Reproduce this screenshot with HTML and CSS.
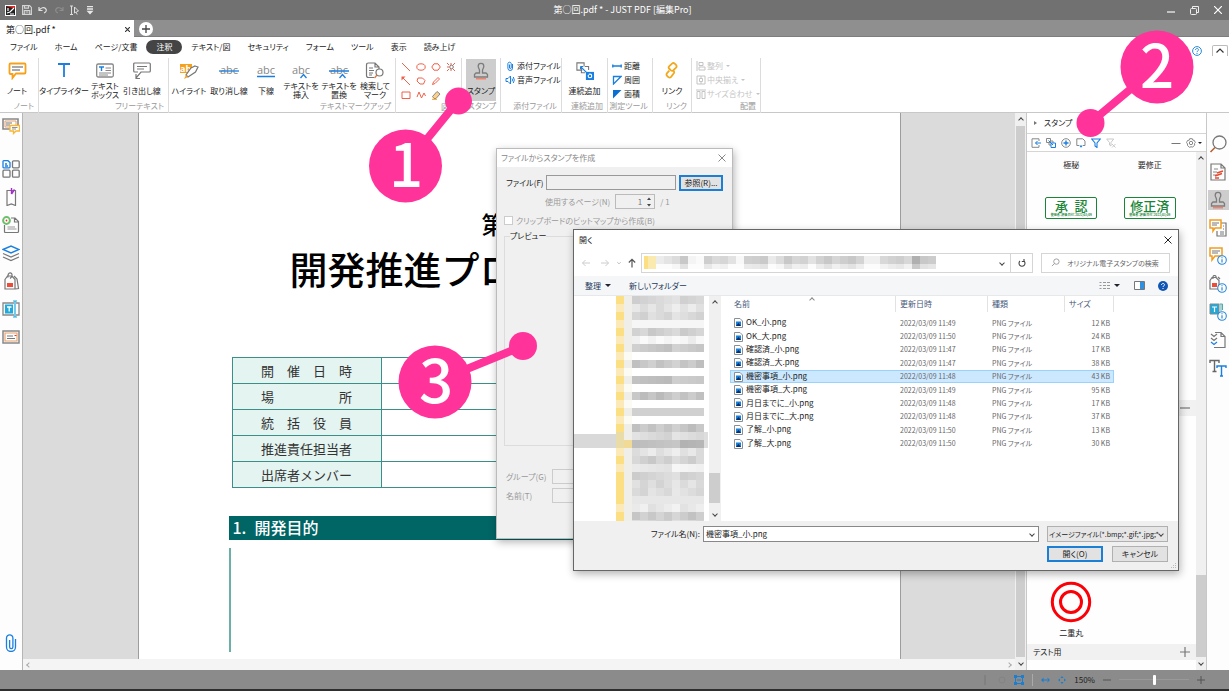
FILE: index.html
```html
<!DOCTYPE html>
<html lang="ja">
<head>
<meta charset="utf-8">
<title>第○回.pdf * - JUST PDF [編集Pro]</title>
<link rel="stylesheet" href="styles.css">
</head>
<body>
<svg class="defs" aria-hidden="true">
  <symbol id="stamp" viewBox="0 0 18 18"><path d="M7.500 11V8.500C7.500 7 6.200 6 6.200 4.200a2.800 2.800 0 0 1 5.600 0C11.800 6 10.500 7 10.500 8.500V11H14l1.500 1.500V15h-13v-2.500L4 11z" fill="none" stroke="#7c7c7c" stroke-width="1.300"/><path d="M4 16.700h10" stroke="#f0836f" stroke-width="1.600"/></symbol>
  <symbol id="png" viewBox="0 0 9 10"><path d="M.5.5h5.500l2.500 2.500v6.500h-8z" fill="#fff" stroke="#8a8f96"/><path d="M2 3.500h5V8H2z" fill="#1a7fd6"/><path d="M2 8l2.500-3L7 8z" fill="#0a2b66"/></symbol>
  <symbol id="info" viewBox="0 0 10 10"><circle cx="5" cy="5" r="4.300" fill="#fff" stroke="#2b88d8" stroke-width="1.100"/><path d="M5 4.300v3.200M5 2.300v1" stroke="#2b88d8" stroke-width="1.200"/></symbol>
</svg>

<header class="titlebar">
  <div class="quick">
    <svg width="11" height="11" viewBox="0 0 11 11"><path d="M0 0h11v11H0z" fill="#fff"/><path d="M1 1h9v9H1z" fill="#222"/><path d="M1 1h9v2L8 3z" fill="#e8251c"/><path d="M2 8l3-1 4-4M3 3v3M5 9h4" stroke="#fff" stroke-width="1.200" fill="none"/></svg>
    <button aria-label="保存"><svg width="10" height="10" viewBox="0 0 10 10" fill="none" stroke="#d5d5d5" stroke-width="1.100"><path d="M.6.6h7l1.800 1.800v7H.6zM2.500.6v2.500h4V.6M2.300 9.200V5.500h5.400v3.700M3.500 7h3"/></svg></button>
    <button aria-label="元に戻す"><svg width="10" height="8" viewBox="0 0 10 8" fill="none" stroke="#e0e0e0" stroke-width="1.200"><path d="M1 1v3.500h3.500M1.200 4.200C3 1.500 6 1 7.500 2.500S8.500 6 6 7"/></svg></button>
    <button aria-label="やり直し"><svg width="10" height="8" viewBox="0 0 10 8" fill="none" stroke="#8d8d8d" stroke-width="1.200"><path d="M9 1v3.500H5.500M8.800 4.200C7 1.500 4 1 2.500 2.500S1.500 6 4 7"/></svg></button>
    <button aria-label="選択"><svg width="10" height="10" viewBox="0 0 10 10" fill="none" stroke="#dedede" stroke-width="1"><path d="M0 1h3M1.500 1v8M0 9.500h3M4.500 2v6l1.500-1 1.200 2.500M4.500 2l4 4-2 .6"/></svg></button>
    <button aria-label="カスタマイズ"><svg width="8" height="9" viewBox="0 0 8 9" fill="#e8e8e8"><path d="M1 0h6v1.200H1zM1 2.200h6v1.600H1zM.5 4.800h7L4 8.500z"/></svg></button>
  </div>
  <div class="app-name">第○回.pdf * - JUST PDF [編集Pro]</div>
  <div class="wincontrols">
    <button aria-label="最小化"><svg width="8" height="8" viewBox="0 0 8 8"><path d="M0 6h8" stroke="#eee" stroke-width="1.300"/></svg></button>
    <button aria-label="元のサイズに戻す"><svg width="9" height="9" viewBox="0 0 9 9" fill="none" stroke="#eee"><rect x=".5" y="2.500" width="6" height="6" rx="1"/><path d="M2.500 2V.5h6v6H7"/></svg></button>
    <button aria-label="閉じる"><svg width="8" height="8" viewBox="0 0 8 8"><path d="M0 0l8 8M8 0L0 8" stroke="#fff" stroke-width="1.200"/></svg></button>
  </div>
</header>

<div class="tabbar">
  <div class="doctab"><span>第○回.pdf *</span><button aria-label="タブを閉じる"><svg width="5" height="5" viewBox="0 0 5 5"><path d="M0 0l5 5M5 0L0 5" stroke="#333" stroke-width="1.100"/></svg></button></div>
  <button class="newtab" aria-label="新しいタブ"><svg width="14" height="14" viewBox="0 0 14 14"><circle cx="7" cy="7" r="7" fill="#fff"/><path d="M3 7h8M7 3v8" stroke="#444" stroke-width="1.300"/></svg></button>
</div>

<nav class="menu">
  <button>ファイル</button><button>ホーム</button><button>ページ/文書</button><button class="current">注釈</button><button>テキスト/図</button><button>セキュリティ</button><button>フォーム</button><button>ツール</button><button>表示</button><button>読み上げ</button>
  <div class="menu-end">
    <button aria-label="ヘルプ"><svg width="10" height="10" viewBox="0 0 10 10" fill="none" stroke="#2b88d8"><circle cx="5" cy="5" r="4.400"/><path d="M3.500 4c0-2 3-2 3-.2C6.500 5 5 4.800 5 6.200M5 7v1"/></svg></button>
    <button class="collapse" aria-label="リボンを閉じる"><svg width="8" height="5" viewBox="0 0 8 5"><path d="M.5 4.500L4 1l3.500 3.500" fill="none" stroke="#333" stroke-width="1.200"/></svg></button>
  </div>
</nav>

<section class="ribbon">
  <div class="group g-note"><div class="tools"><button class="tool">
    <svg width="19" height="18" viewBox="0 0 19 18" fill="none"><path d="M2.500 1.500h14q1 0 1 1v8q0 1-1 1H8L4.500 16v-4h-2q-1 0-1-1V2.500q0-1 1-1z" stroke="#f7a11a" stroke-width="1.800"/><path d="M4 5h11M4 8h8" stroke="#555" stroke-width="1.200"/></svg><span>ノート</span></button></div><h2>ノート</h2></div>

  <div class="group g-free"><div class="tools">
    <button class="tool w50"><svg width="14" height="18" viewBox="0 0 14 18"><path d="M1 2h12M7 2v13" stroke="#1a7fe0" stroke-width="1.800"/></svg><span>タイプライター</span></button>
    <button class="tool w32"><svg width="18" height="18" viewBox="0 0 18 18" fill="none"><rect x=".7" y="2" width="16.600" height="13" rx="1.500" stroke="#888" stroke-width="1.300"/><path d="M3 5h5M5.500 5v4" stroke="#1a7fe0" stroke-width="1.400"/><path d="M9.500 6h5.500M9.500 8.500h5.500M3 11h12M3 13h9" stroke="#888"/></svg><span>テキスト<br>ボックス</span></button>
    <button class="tool w42"><svg width="18" height="18" viewBox="0 0 18 18" fill="none" stroke="#777" stroke-width="1.200"><path d="M1.700 1h14.600q1 0 1 1v7q0 1-1 1H8l-5 6M1.700 1q-1 0-1 1v7q0 1 1 1H5M3 12v4.500h4M4 4.500h10M4 7h7"/></svg><span>引き出し線</span></button>
  </div><h2>フリーテキスト</h2></div>

  <div class="group g-mark"><div class="tools">
    <button class="tool w40"><svg width="20" height="18" viewBox="0 0 20 18"><path d="M1 2h12v9H1z" fill="#f7a11a"/><text x="1" y="10" class="abc white">ab</text><path d="M16 4l3 1-2.500 5L9 15l-2-2 5-7z" fill="#fff" stroke="#777" stroke-width="1.200"/><path d="M7 13l2 2-4 2z" fill="#f7a11a"/></svg><span>ハイライト</span></button>
    <button class="tool w40"><svg width="20" height="18" viewBox="0 0 20 18"><text x="1" y="12" class="abc">abc</text><path d="M0 9h20" stroke="#1a7fe0" stroke-width="1.300"/></svg><span>取り消し線</span></button>
    <button class="tool w34"><svg width="20" height="18" viewBox="0 0 20 18"><text x="1" y="12" class="abc">abc</text><path d="M1 14.500h18" stroke="#1a7fe0" stroke-width="1.500"/></svg><span>下線</span></button>
    <button class="tool w36"><svg width="20" height="18" viewBox="0 0 20 18"><text x="1" y="12" class="abc">abc</text><path d="M9.500 16l3-3.500 3 3.500" fill="none" stroke="#1a7fe0" stroke-width="1.300"/></svg><span>テキストを<br>挿入</span></button>
    <button class="tool w40"><svg width="20" height="18" viewBox="0 0 20 18"><text x="1" y="12" class="abc">abc</text><path d="M0 9h20M10.500 16l3-3.500 3 3.500" fill="none" stroke="#1a7fe0" stroke-width="1.300"/></svg><span>テキストを<br>置換</span></button>
    <button class="tool w32"><svg width="20" height="18" viewBox="0 0 20 18" fill="none" stroke="#777" stroke-width="1.200"><path d="M9 15.500H3.500q-2 0-2-2V3q0-2 2-2H10l4 4v2M10 1v4h4M4 6h4M4 8.500h5M4 11h4M4 13h3"/><circle cx="14.500" cy="10.500" r="3.500" fill="#fff"/><path d="M12 13l-2.500 3" stroke="#d9773a"/></svg><span>検索して<br>マーク</span></button>
  </div><h2>テキストマークアップ</h2></div>

  <div class="group g-shape"><div class="shapes">
    <button aria-label="直線"><svg viewBox="0 0 10 10"><path d="M1 1l8 8"/></svg></button>
    <button aria-label="楕円"><svg viewBox="0 0 10 10"><ellipse cx="5" cy="5" rx="4.200" ry="3.200"/></svg></button>
    <button aria-label="多角形"><svg viewBox="0 0 10 10"><path d="M3 1.800h4L9.300 5 7 8.200H3L.8 5z"/></svg></button>
    <button aria-label="雲形"><svg viewBox="0 0 10 10"><path d="M1 1l2 2M9 1L7 3M1 9l2-2M9 9L7 7M5 1v2M5 9V7M1 5h2"/><circle cx="5.500" cy="5" r="1.800" stroke="#777"/></svg></button>
    <button aria-label="矢印"><svg viewBox="0 0 10 10"><path d="M2 2l7 7"/><path d="M.5.5h4l-4 4z" fill="#f0604a" stroke="none"/></svg></button>
    <button aria-label="多角形2"><svg viewBox="0 0 10 10"><path d="M2 2h4.500L9 4.500 7.500 8H4L1 5z"/></svg></button>
    <button aria-label="鉛筆"><svg viewBox="0 0 10 10"><path d="M1.500 8.500L2.500 6 7 1.500 8.500 3 4 7.500z"/></svg></button><i></i>
    <button aria-label="四角形"><svg viewBox="0 0 10 10"><path d="M1 2h8v6.500H1z"/></svg></button>
    <button aria-label="折れ線"><svg viewBox="0 0 10 10"><path d="M1 7l2-5 2.500 6L8 3l1.500 3"/></svg></button>
    <button aria-label="消しゴム"><svg viewBox="0 0 10 10"><path d="M1.500 6.500l4.500-5L9 4 5 8.500H3z" fill="#fbd08a" stroke="#888"/><path d="M1 9.300h5" stroke="#f7a11a"/></svg></button>
  </div><h2>図形</h2></div>

  <div class="group g-stamp"><div class="tools"><button class="tool pressed"><svg width="18" height="18"><use href="#stamp"/></svg><span>スタンプ</span></button></div><h2>スタンプ</h2></div>

  <div class="group g-attach"><div class="rows">
    <button><svg viewBox="0 0 10 10"><path d="M7.500 3v4.200a2.300 2.300 0 0 1-4.600 0V2.500a1.700 1.700 0 0 1 3.300 0V7a.9.9 0 0 1-1.700 0V3.500" fill="none" stroke="#1a7fe0"/></svg>添付ファイル</button>
    <button><svg viewBox="0 0 10 10" fill="none" stroke="#1a7fe0"><path d="M1 3.500h2L5.500 1v8L3 6.500H1zM7 3.500q1 1.500 0 3M8.300 2q2 3 0 6"/></svg>音声ファイル</button>
  </div><h2>添付ファイル</h2></div>

  <div class="group g-seq"><div class="tools"><button class="tool"><svg width="20" height="20" viewBox="0 0 20 20" fill="none" stroke="#777" stroke-width="1.200"><path d="M7 9H1V1h8v4M6 12v-3M10 5h4v4M6 5v7h4"/><path d="M11 11h9v9h-9z" fill="#1a7fe0" stroke="none"/><circle cx="15.500" cy="15.500" r="2" stroke="#fff"/><path d="M5 5l9 9M5 5v3M5 5h3" stroke="#1a7fe0"/></svg><span>連続追加</span></button></div><h2>連続追加</h2></div>

  <div class="group g-measure"><div class="rows">
    <button><svg viewBox="0 0 10 10"><path d="M1 5h8M.8 3.500v3M9.200 3.500v3" stroke="#1a7fe0" stroke-width="1.400"/></svg>距離</button>
    <button><svg viewBox="0 0 10 10"><path d="M1.500 9V1.500H9z" fill="none" stroke="#1a7fe0" stroke-width="1.300"/></svg>周囲</button>
    <button><svg viewBox="0 0 10 10"><path d="M1 9.500V1h8.500z" fill="#0a6fd0"/></svg>面積</button>
  </div><h2>測定ツール</h2></div>

  <div class="group g-link"><div class="tools"><button class="tool"><svg width="16" height="20" viewBox="0 0 16 20" fill="none" stroke="#f2a81d" stroke-width="2"><path d="M6.500 9L5 7.500Q3.500 6 5 4.500L8 1.800q1.500-1.300 3 0l1.500 1.500q1.300 1.500 0 3L9 9.500Q8 10.500 6.500 9zM9.500 9.500q1.500 1.500.5 3L7 16.500q-1.500 1.500-3 .3L2.500 15.300q-1.300-1.300 0-3L5 9.500"/></svg><span>リンク</span></button></div><h2>リンク</h2></div>

  <div class="group g-align"><div class="rows off">
    <button disabled><svg viewBox="0 0 10 10"><path d="M1 0v10M3 1.500h4v3H3zM3 6h6v3H3z"/></svg>整列<b class="dd"></b></button>
    <button disabled><svg viewBox="0 0 10 10"><path d="M1 1h8v8H1zM3.500 3.500h3v3h-3zM5 1v2M5 7v2"/></svg>中央揃え<b class="dd"></b></button>
    <button disabled><svg viewBox="0 0 10 10"><path d="M1 2.500h3v7H1zM6 2.500h3v7H6zM0 1h10"/></svg>サイズ合わせ<b class="dd"></b></button>
  </div><h2>配置</h2></div>
</section>

<main class="workspace">
  <aside class="rail left">
    <button aria-label="注釈一覧"><svg viewBox="0 0 18 18" fill="none"><path d="M1 2h15v10H1z" stroke="#888" stroke-width="1.600"/><path d="M3 4h11v6H3z" stroke="#e0a070" /><path d="M4 6h6M4 8h4" stroke="#777"/><path d="M8 8.500h9.500V14H14l-2.500 2.500V14H8z" fill="#fff" stroke="#f7b733" stroke-width="1.300"/><path d="M10 10.500h5.500M10 12h4" stroke="#777" stroke-width=".8"/></svg></button>
    <button class="second" aria-label="ページ"><svg viewBox="0 0 18 18" fill="none" stroke="#777" stroke-width="1.300"><path d="M1 1.500q0-.8.8-.8H6L8 2.500V7q0 .8-.8.8H1.800Q1 7.800 1 7z" stroke="#1a7fe0"/><path d="M3 4h2M3 6h3" stroke="#1a7fe0"/><rect x="10.500" y=".8" width="6.700" height="7" rx="1"/><rect x="1" y="10.200" width="7" height="7" rx="1"/><rect x="10.500" y="10.200" width="6.700" height="7" rx="1"/></svg></button>
    <button aria-label="しおり"><svg viewBox="0 0 18 18" fill="none"><path d="M5 2.500h8.500v15L9.300 16 5 17.500z" stroke="#777" stroke-width="1.200"/><path d="M9.500 0v6M9.500 6l3-4.500" stroke="#a52ad0" stroke-width="1.400"/></svg></button>
    <button aria-label="ページ情報"><svg viewBox="0 0 18 18" fill="none"><path d="M9 2h4l3.500 3.500v10q0 1-1 1h-12q-1 0-1-1V9M12.500 2v4h4" stroke="#777" stroke-width="1.200"/><path d="M5.500 11H13M5.500 13h9" stroke="#999"/><circle cx="4.500" cy="4.500" r="3.400" fill="#fff" stroke="#6cc06c" stroke-width="2"/><circle cx="4.500" cy="4.500" r=".9" fill="#e33"/></svg></button>
    <button aria-label="レイヤー"><svg viewBox="0 0 18 18" fill="none" stroke="#777" stroke-width="1.200"><path d="M1 13l8 3.500 8-3.500M1 9.500L9 13l8-3.500"/><path d="M1 5.500L9 2l8 3.500L9 9z" stroke="#1a7fe0" stroke-width="1.400"/></svg></button>
    <button aria-label="タグ"><svg viewBox="0 0 18 18" fill="none" stroke="#777" stroke-width="1.200"><path d="M3 7.500L5.500 4H10l3 3.500V17H3zM6 5.500c-1-6 5-6 4-1l-2 2M12 4l3 3 1.500 9.500-3 .5"/><path d="M5 11h6v4H5z" fill="#ee4b38" stroke="none"/></svg></button>
    <button aria-label="フォント"><svg viewBox="0 0 18 18" fill="none"><path d="M12 3H1v12h11M14 3h3v12h-3" stroke="#888" stroke-width="1.300"/><path d="M3 4.500h8v9H3z" fill="#1eaadc"/><path d="M5 7h4.500M7.200 7v4.500" stroke="#fff" stroke-width="1.300"/><path d="M13 1v16M11 1h4M11 17h4" stroke="#1eaadc" stroke-width="1.200"/></svg></button>
    <button aria-label="署名"><svg viewBox="0 0 18 18" fill="none"><path d="M1 3h16v12H1z" stroke="#888" stroke-width="1.500"/><path d="M3 5h12v8H3z" stroke="#e8a06a" stroke-width="1.100"/><path d="M5 8h6M5 10.500h8" stroke="#777"/><path d="M12.500 7.500h2" stroke="#e33"/></svg></button>
    <button class="last" aria-label="添付"><svg viewBox="0 0 18 18"><path d="M13.500 5v8a4.500 4.500 0 0 1-9 0V4a3.200 3.200 0 0 1 6.400 0v9a1.600 1.600 0 0 1-3.300 0V6" fill="none" stroke="#1a7fe0" stroke-width="1.300"/></svg></button>
  </aside>

  <div class="canvas">
    <div class="scroll-region">
      <article class="page">
        <p class="issue">第</p>
        <h1>開発推進プロ</h1>
        <table class="facts">
          <tr><th>開　催　日　時</th><td></td></tr>
          <tr><th>場　　　　　所</th><td></td></tr>
          <tr><th>統　括　役　員</th><td></td></tr>
          <tr><th>推進責任担当者</th><td></td></tr>
          <tr><th>出席者メンバー</th><td></td></tr>
        </table>
        <h2>1.&ensp;開発目的</h2>
        <div class="body-rule"></div>
      </article>
    </div>
    <div class="hscroll"><span class="cv l"></span><span class="cv r"></span></div>
  </div>
  <div class="vscroll"><span class="cv u"></span><i></i><span class="cv d"></span></div>

  <aside class="panel">
    <h2><span class="tri"></span>スタンプ</h2>
    <div class="panel-tools">
      <button aria-label="読み込み"><svg viewBox="0 0 10 10" fill="none" stroke="#888"><path d="M8 3V.8H1v8.500h7V7"/><path d="M10 5H4.500M6.500 3l-2 2 2 2" stroke="#1a7fe0"/></svg></button>
      <button aria-label="連続追加"><svg viewBox="0 0 10 10" fill="none" stroke="#888"><path d="M.5.5h4v4h-4zM3 5v2h2M5 3h2v2"/><path d="M5 5h4.500v4.500H5zM2.500 2.500L7 7" stroke="#1a7fe0"/></svg></button>
      <button aria-label="追加"><svg viewBox="0 0 10 10" fill="none" stroke="#888"><circle cx="5" cy="5" r="4.300"/><path d="M5 2.500v5M2.500 5h5" stroke="#1a7fe0" stroke-width="1.400"/></svg></button>
      <button aria-label="保存"><svg viewBox="0 0 10 10" fill="none" stroke="#888"><path d="M3 7.500H.8V.8h6L9 3v4.500H7"/><path d="M3.200 7.500h3.600L5 9.800z" fill="#1a7fe0" stroke="none"/></svg></button>
      <button aria-label="フィルター"><svg viewBox="0 0 10 10"><path d="M.7 1h8.600L6 5v4.500L4 8V5z" fill="none" stroke="#1a7fe0" stroke-width="1.100"/></svg></button>
      <button aria-label="フィルター解除"><svg viewBox="0 0 10 10" fill="none" stroke="#c9c9c9"><path d="M.7 1h7L5 4.500V8L3.500 7V4.500zM6 6l3.500 3.500M9.500 6L6 9.500"/></svg></button>
      <span class="grow"></span>
      <button aria-label="縮小"><svg viewBox="0 0 10 10"><path d="M.5 5.500h9" stroke="#777"/></svg></button>
      <button aria-label="設定" class="gear"><svg viewBox="0 0 10 10" fill="none" stroke="#888"><circle cx="5" cy="5" r="1.700"/><path d="M3.700.7h2.600l.5 1.400 1.500.3 1 2.200-.8 1 .2 1.600-2 1.800-1.700-.2-1.500.5-2-1.800v-1.600l-1-1.200 1-2.200 1.700-.3z"/></svg><b class="dd"></b></button>
    </div>
    <div class="stamps">
      <div class="stamp-list">
        <div class="stamp-grid">
          <span>極秘</span><span>要修正</span>
          <div class="seal"><strong>承&ensp;認</strong><small>使用者：評価 日付：2022/03/09</small></div>
          <div class="seal"><strong>修正済</strong><small>使用者：評価 日付：2022/03/09</small></div>
        </div>
        <div class="cat"><span></span><svg viewBox="0 0 10 10"><path d="M0 5h10" stroke="#777" stroke-width="1.200"/></svg></div>
        <div class="stamp-grid lower">
          <figure><svg width="42" height="42" viewBox="0 0 42 42" fill="none" stroke="#fb0007" stroke-width="3"><circle cx="21" cy="21" r="18.700"/><circle cx="21" cy="21" r="10.500"/></svg><figcaption>二重丸</figcaption></figure>
        </div>
        <div class="cat"><span>テスト用</span><svg viewBox="0 0 10 10"><path d="M0 5h10M5 0v10" stroke="#777" stroke-width="1.200"/></svg></div>
        <div class="tail"></div>
      </div>
      <div class="vscroll narrow"><span class="cv u"></span><i></i><span class="cv d"></span></div>
    </div>
  </aside>

  <aside class="rail right">
    <button aria-label="検索"><svg viewBox="0 0 18 18" fill="none"><circle cx="10.500" cy="7.500" r="6.500" stroke="#777" stroke-width="1.300"/><path d="M6 12.500L1.500 17" stroke="#b5622f" stroke-width="1.600"/></svg></button>
    <button aria-label="比較"><svg viewBox="0 0 18 18" fill="none"><path d="M2 1h10l4 4v12H2zM12 1v4h4" stroke="#777" stroke-width="1.200"/><path d="M5 6h4M4 9h4M4 12h4" stroke="#888"/><path d="M8 10l6-2M6 13l7-2.500M6 15h4" stroke="#e9482f" stroke-width="1.500"/></svg></button>
    <button class="on" aria-label="スタンプ"><svg viewBox="0 0 18 18"><use href="#stamp"/></svg></button>
    <button aria-label="注釈"><svg viewBox="0 0 18 18" fill="none"><path d="M9 4h8v13H8V12" stroke="#777" stroke-width="1.200"/><path d="M14 7h1M14 10h1M11 13h4M11 15h4" stroke="#777"/><path d="M1 1h11v8H6l-2 3V9H1z" fill="#fff" stroke="#f29c1f" stroke-width="1.500"/><path d="M3 4h7M3 6h5" stroke="#777"/></svg></button>
    <button aria-label="注釈の情報"><svg viewBox="0 0 18 18" fill="none"><path d="M1 1h12v8H6l-3 4V9H1z" stroke="#f29c1f" stroke-width="1.500"/><path d="M3 4h8M3 6h6" stroke="#777"/><use href="#info" x="8" y="8" width="10" height="10"/></svg></button>
    <button aria-label="タグの情報"><svg viewBox="0 0 18 18" fill="none" stroke="#777" stroke-width="1.200"><path d="M1 5.500L3 2.500h4l3 3V14H1zM4 4c-1-5 4-4 3-1M9 2l2 2"/><path d="M3 8h5v4H3z" fill="#ee4b38" stroke="none"/><use href="#info" x="8" y="8" width="10" height="10"/></svg></button>
    <button aria-label="フォントの情報"><svg viewBox="0 0 18 18" fill="none"><path d="M1 1h9v10H1z" fill="#1eaadc" stroke="#888"/><path d="M3 4h5M5.500 4v5" stroke="#fff" stroke-width="1.200"/><path d="M12 1v7M10.500 1h3v6" stroke="#5aa" /><use href="#info" x="8" y="8" width="10" height="10"/></svg></button>
    <button aria-label="一括処理"><svg viewBox="0 0 18 18" fill="none" stroke="#777" stroke-width="1.200"><path d="M6 1.500h6l4 4v11H5M12 1.500v4h4M2 3l3 2.500L8 3M2 7l3 2.500L8 7"/><path d="M2 11l3 2.500L8 11" stroke="#1a7fe0"/></svg></button>
    <button aria-label="テキスト"><svg viewBox="0 0 18 18" fill="none"><path d="M1 4V1.500h9V4M5.500 1.500v11M3.500 12.500h4" stroke="#666" stroke-width="1.400"/><path d="M8 9V7h9v2M12.500 7v10M11 17h3" stroke="#1a7fe0" stroke-width="1.400"/></svg></button>
  </aside>
</main>

<footer class="status">
  <svg width="6" height="10" viewBox="0 0 6 10"><path d="M1 0v10" stroke="#777"/></svg>
  <svg width="8" height="8" viewBox="0 0 8 8" fill="none" stroke="#838383"><circle cx="4" cy="4" r="3"/></svg>
  <svg width="10" height="10" viewBox="0 0 10 10" fill="none" stroke="#1a7fd0"><path d="M1.500 1.500h7v7h-7zM3 5h4"/><path d="M0 0h3v3H0zM7 0h3v3H7zM0 7h3v3H0zM7 7h3v3H7z" fill="#1a7fd0" stroke="none"/></svg>
  <span class="sep"></span>
  <svg width="9" height="8" viewBox="0 0 9 8"><path d="M0 4l2.500-2.500v5zM9 4L6.500 1.500v5zM2 3.500h5v1H2z" fill="#1a7fd0"/></svg>
  <svg width="8" height="8" viewBox="0 0 8 8" fill="#1a7fd0"><path d="M4 0l1.500 2h-3zM4 8L2.500 6h3zM0 4l2-1.500v3zM8 4L6 5.500v-3z"/></svg>
  <span class="zoom">150%</span>
  <svg width="8" height="8" viewBox="0 0 8 8"><path d="M0 4h8" stroke="#555"/></svg>
  <input type="range" min="0" max="100" value="50" aria-label="ズーム">
  <svg width="8" height="8" viewBox="0 0 8 8"><path d="M0 4h8M4 0v8" stroke="#555"/></svg>
</footer>

<section class="window create" aria-label="ファイルからスタンプを作成">
  <header><span>ファイルからスタンプを作成</span><button aria-label="閉じる"><svg width="8" height="8" viewBox="0 0 8 8"><path d="M.5.5l7 7M7.500.5l-7 7" stroke="#888"/></svg></button></header>
  <div class="create-body">
    <div class="row"><label for="f">ファイル(F)</label><input id="f" type="text"><button class="btn primary">参照(R)...</button></div>
    <div class="row dim pages"><label for="n">使用するページ(N)</label><span class="spin"><input id="n" type="text" value="1"><svg width="6" height="10" viewBox="0 0 6 10" fill="#444"><path d="M1 3l2-2.500L5 3zM1 7l2 2.500L5 7z"/></svg></span><span>/ 1</span></div>
    <div class="row dim check"><input id="c" type="checkbox" disabled><label for="c">クリップボードのビットマップから作成(B)</label></div>
    <fieldset><legend>プレビュー</legend></fieldset>
    <div class="row dim"><label class="field-name" for="g">グループ(G)</label><input id="g" type="text"></div>
    <div class="row dim"><label class="field-name" for="t">名前(T)</label><input id="t" type="text"></div>
  </div>
</section>

<section class="window open" aria-label="開く">
  <header><span>開く</span><button aria-label="閉じる"><svg width="8" height="8" viewBox="0 0 8 8"><path d="M.5.5l7 7M7.500.5l-7 7" stroke="#222"/></svg></button></header>
  <div class="nav">
    <button aria-label="戻る"><svg viewBox="0 0 10 10"><path d="M9 5H1.500M4.500 2l-3 3 3 3" fill="none" stroke="#ccc"/></svg></button>
    <button aria-label="進む"><svg viewBox="0 0 10 10"><path d="M1 5h7.500M5.500 2l3 3-3 3" fill="none" stroke="#ccc"/></svg></button>
    <button class="tiny" aria-label="履歴"><svg viewBox="0 0 10 10"><path d="M2 3.500l3 3 3-3" fill="none" stroke="#bbb" stroke-width="1.500"/></svg></button>
    <button aria-label="上へ"><svg viewBox="0 0 10 10"><path d="M5 9.500V1.500M1.800 4.500L5 1.300l3.200 3.200" fill="none" stroke="#555" stroke-width="1.200"/></svg></button>
    <div class="address"><svg class="mosaic" id="path-mosaic" width="292" height="13"></svg><span class="grow"></span><span class="cv d"></span><button class="reload" aria-label="更新"><svg viewBox="0 0 10 10"><path d="M3 3a3 3 0 1 0 4 0M7 1v2.500H4.800" fill="none" stroke="#444" stroke-width="1.100"/></svg></button></div>
    <label class="search"><svg width="9" height="9" viewBox="0 0 10 10" fill="none" stroke="#999"><circle cx="6" cy="4" r="3"/><path d="M4 6L1 9"/></svg><input type="text" placeholder="オリジナル電子スタンプの検索" aria-label="検索"></label>
  </div>
  <div class="cmd">
    <button>整理<b class="dd"></b></button><button>新しいフォルダー</button><span class="grow"></span>
    <button aria-label="表示方法"><svg width="11" height="9" viewBox="0 0 11 9" stroke="#999" fill="none"><path d="M.5 1.500h2M.5 4.500h2M.5 7.500h2M4 1.500h3M8 1.500h3M4 4.500h3M8 4.500h3M4 7.500h3M8 7.500h3"/></svg><b class="dd"></b></button>
    <button aria-label="プレビュー"><svg width="11" height="9" viewBox="0 0 11 9"><path d="M.5.5h10v8H.5z" fill="#fff" stroke="#777"/><path d="M6 1h4v7H6z" fill="#2f8fe0"/></svg></button>
    <button aria-label="ヘルプ"><svg width="10" height="10" viewBox="0 0 10 10"><circle cx="5" cy="5" r="5" fill="#1057b5"/><path d="M3.500 4c0-2 3-2 3-.2C6.500 5 5 4.800 5 6M5 7v1" stroke="#fff" fill="none"/></svg></button>
  </div>
  <div class="panes">
    <div class="tree"><svg class="mosaic" id="tree-mosaic" width="136" height="229"></svg></div>
    <div class="vscroll side"><span class="cv u"></span><i></i><span class="cv d"></span></div>
    <div class="files">
      <table>
        <thead><tr><th>名前<span class="sort"></span></th><th>更新日時</th><th>種類</th><th>サイズ</th></tr></thead>
        <tbody>
          <tr><td><svg><use href="#png"/></svg>OK_小.png</td><td>2022/03/09 11:49</td><td>PNG ファイル</td><td>12 KB</td></tr>
          <tr><td><svg><use href="#png"/></svg>OK_大.png</td><td>2022/03/09 11:50</td><td>PNG ファイル</td><td>24 KB</td></tr>
          <tr><td><svg><use href="#png"/></svg>確認済_小.png</td><td>2022/03/09 11:47</td><td>PNG ファイル</td><td>17 KB</td></tr>
          <tr><td><svg><use href="#png"/></svg>確認済_大.png</td><td>2022/03/09 11:47</td><td>PNG ファイル</td><td>38 KB</td></tr>
          <tr class="selected"><td><svg><use href="#png"/></svg>機密事項_小.png</td><td>2022/03/09 11:48</td><td>PNG ファイル</td><td>43 KB</td></tr>
          <tr><td><svg><use href="#png"/></svg>機密事項_大.png</td><td>2022/03/09 11:49</td><td>PNG ファイル</td><td>95 KB</td></tr>
          <tr><td><svg><use href="#png"/></svg>月日までに_小.png</td><td>2022/03/09 11:48</td><td>PNG ファイル</td><td>17 KB</td></tr>
          <tr><td><svg><use href="#png"/></svg>月日までに_大.png</td><td>2022/03/09 11:48</td><td>PNG ファイル</td><td>37 KB</td></tr>
          <tr><td><svg><use href="#png"/></svg>了解_小.png</td><td>2022/03/09 11:50</td><td>PNG ファイル</td><td>13 KB</td></tr>
          <tr><td><svg><use href="#png"/></svg>了解_大.png</td><td>2022/03/09 11:50</td><td>PNG ファイル</td><td>30 KB</td></tr>
        </tbody>
      </table>
    </div>
  </div>
  <footer>
    <label for="name">ファイル名(N):</label>
    <span class="combo"><input id="name" type="text" value="機密事項_小.png"><span class="cv d"></span></span>
    <span class="select"><select aria-label="ファイルの種類"><option>イメージファイル(*.bmp;*.gif;*.jpg;*</option></select><span class="cv d"></span></span>
    <div class="actions"><button class="btn primary">開く(O)</button><button class="btn">キャンセル</button></div>
    <svg class="grip" width="6" height="6" viewBox="0 0 6 6" fill="#bbb"><path d="M4 0h1v1H4zM2 2h1v1H2zM4 2h1v1H4zM0 4h1v1H0zM2 4h1v1H2zM4 4h1v1H4z"/></svg>
  </footer>
</section>

<svg class="callouts" viewBox="0 0 1229 691" width="1229" height="691">
  <g stroke="#ff3399" stroke-width="8"><path d="M405 166L458 101M1157 67L1090 123M435 382L523 346"/></g>
  <g fill="#ff3399"><circle cx="405.500" cy="166" r="36.500"/><circle cx="458.500" cy="101" r="13.500"/><circle cx="1157" cy="67" r="36.500"/><circle cx="1090.500" cy="123" r="14"/><circle cx="435" cy="382" r="36.500"/><circle cx="523" cy="346" r="14"/></g>
  <g class="num"><text x="406" y="187">1</text><text x="1157" y="88">2</text><text x="436" y="403">3</text></g>
</svg>
<script src="mosaic.js"></script>
</body>
</html>
```

FILE: styles.css
```css
* { box-sizing: border-box; }
body {
  margin: 0;
  height: 100vh;
  display: flex;
  flex-direction: column;
  overflow: hidden;
  position: relative;
  background: #fff;
  color: #222;
  font-family: "Noto Sans CJK JP", sans-serif;
  font-size: 8px;
  line-height: 10px;
  font-feature-settings: "palt";
}
button, input, select {
  font: inherit;
  font-feature-settings: inherit;
  color: inherit;
  margin: 0;
  padding: 0;
  border: 0;
  border-radius: 0;
  background: none;
  outline: none;
}
button { display: flex; align-items: center; justify-content: center; white-space: nowrap; flex: none; }
h1, h2, p, figure { margin: 0; font-weight: 400; }
svg { display: block; flex: none; }
.defs { position: absolute; width: 0; height: 0; }
.grow { flex: 1; }

/* title and tabs */
.titlebar {
  display: grid;
  grid-template-columns: 1fr auto 1fr;
  align-items: center;
  height: 20px;
  padding: 0 7px 0 5px;
  background: #717171;
}
.quick { display: flex; align-items: center; gap: 6px; }
.app-name { color: #fff; font-size: 9px; padding-left: 18px; }
.wincontrols { display: flex; justify-content: flex-end; align-items: center; gap: 15px; }
.tabbar { display: flex; height: 17px; gap: 5px; background: #8f8f8f; border-bottom: 1px solid #7d7d7d; }
.doctab {
  display: flex;
  align-items: center;
  justify-content: space-between;
  width: 134px;
  height: 17px;
  padding: 2px 4px 0 6px;
  background: #fff;
  font-size: 9px;
}
.newtab { height: 17px; }

/* menu */
.menu { display: flex; align-items: center; height: 20px; padding-left: 2px; gap: 1px; margin-bottom: 1px; }
.menu > button { height: 14px; padding: 0 8px; }
.menu > .current { background: #444; color: #fff; border-radius: 7px; padding: 0 10px; }
.menu-end { display: flex; margin-left: auto; gap: 10px; padding-right: 1px; align-items: flex-end; height: 17px; }
.collapse { width: 16px; height: 11px; border: 1px solid #bbb; border-bottom: 0; border-radius: 2px 2px 0 0; }

/* ribbon */
.ribbon { display: flex; height: 55px; border-bottom: 1px solid #c8c8c8; }
.group { display: flex; flex-direction: column; border-right: 1px solid #dcdcdc; height: 55px; padding-right: 4px; }
.group h2 { margin-top: auto; text-align: right; font-size: 8px; line-height: 10px; color: #999; padding-bottom: 2px; white-space: nowrap; }
.tools { display: flex; height: 42px; margin-top: 1px; }
.tool { flex-direction: column; justify-content: flex-start; gap: 1px; padding-top: 3px; height: 42px; width: 100%; }
.tool span { display: flex; align-items: center; justify-content: center; height: 18px; line-height: 9px; text-align: center; }
.tool svg { height: 18px; }
.tool.w32 { width: 32px; } .tool.w34 { width: 34px; } .tool.w36 { width: 36px; }
.tool.w40 { width: 40px; } .tool.w42 { width: 42px; } .tool.w50 { width: 50px; }
.pressed { background: #cdcdcd; }
.abc { font-family: "Open Sans", sans-serif; font-size: 11px; fill: #888; }
.abc.white { fill: #fff; font-size: 9px; font-weight: 700; }
.g-note { width: 39px; }
.g-free { width: 130px; }
.g-mark { width: 227px; }
.g-shape { width: 66px; }
.g-stamp { width: 39px; padding-left: 4px; }
.g-attach { width: 61px; }
.g-seq { width: 46px; padding-left: 4px; }
.g-measure { width: 45px; }
.g-link { width: 39px; padding-left: 4px; }
.g-align { width: 69px; }
.shapes { display: grid; grid-template-columns: repeat(4, 14px); grid-auto-rows: 14px; gap: 0 1px; padding: 2px 0 0 3px; }
.shapes svg { width: 10px; height: 10px; fill: none; stroke: #f0604a; }
.rows { display: flex; flex-direction: column; padding: 1px 0 0 4px; }
.rows button { height: 14px; gap: 2px; justify-content: flex-start; }
.rows svg { width: 10px; height: 10px; }
.off button { color: #c4c4c4; gap: 1px; }
.off svg { fill: none; stroke: #c4c4c4; }

/* workspace */
.workspace { flex: 1; min-height: 0; display: flex; }
.rail { width: 23px; display: flex; flex-direction: column; align-items: center; background: #fdfdfd; }
.rail button { width: 21px; height: 28px; }
.rail svg { width: 18px; height: 18px; }
.rail.left { border-right: 1px solid #b5b5b5; }
.rail .second { margin-top: 16px; }
.rail .last { margin-top: auto; margin-bottom: 13px; }
.rail.left button:first-child { align-items: center; height: 26px; }
.rail.right { border-left: 1px solid #c8c8c8; padding-top: 17px; }
.rail .on { height: 20px; margin: 4px 0; background: #cdcdcd; }
.canvas { flex: 1; min-width: 0; display: flex; flex-direction: column; }
.scroll-region { flex: 1; min-height: 0; display: flex; justify-content: center; background: #dbdbdb; overflow: hidden; }
.page { width: 763px; background: #fff; border: 1px solid #9d9d9d; border-width: 0 1px; padding: 95px 92px 0 90px; line-height: 1; }
.issue { font-size: 24px; line-height: 32px; font-weight: 500; padding-left: 253px; color: #000; }
.page h1 { font-size: 38px; line-height: 56px; font-weight: 500; padding-left: 61px; color: #000; font-feature-settings: normal; white-space: nowrap; }
.facts { width: 574px; margin: 61px 0 0 3px; border-collapse: collapse; border: 1px solid #3c8f88; }
.facts th, .facts td { height: 26px; padding: 0; border: 1px solid #3c8f88; }
.facts th { width: 149px; background: #e3f4f1; font-size: 13px; line-height: 18px; font-weight: 400; color: #333; font-feature-settings: normal; }
.page h2 { height: 24px; margin-top: 28px; padding-left: 4px; background: #006565; color: #fff; font-size: 16px; line-height: 23px; font-weight: 500; font-feature-settings: normal; }
.body-rule { height: 104px; margin-top: 8px; border-left: 2px solid #6ab0a8; }
.hscroll { height: 11px; display: flex; justify-content: space-between; align-items: center; padding: 0 4px; background: #f4f4f4; }
.vscroll { width: 11px; display: flex; flex-direction: column; align-items: center; gap: 4px; padding: 5px 1px; background: #f0f0f0; }
.vscroll i { flex: 1; width: 100%; background: #cdcdcd; }

/* chevrons */
.cv { width: 4px; height: 4px; border: solid #444; border-width: 1px 1px 0 0; flex: none; }
.cv.u { transform: rotate(-45deg); }
.cv.d { transform: rotate(135deg); }
.cv.l { transform: rotate(-135deg); border-color: #aaa; }
.cv.r { transform: rotate(45deg); border-color: #aaa; }
.dd { border: 3px solid transparent; border-top-color: #223; border-bottom: 0; margin-left: 4px; }
.off .dd { border-width: 2px; border-bottom: 0; border-top-color: #c4c4c4; margin-left: 2px; }

/* stamp panel */
.panel { width: 180px; display: flex; flex-direction: column; border-left: 1px solid #c8c8c8; }
.panel > h2 { display: flex; align-items: center; gap: 7px; height: 21px; padding-left: 7px; font-size: 8px; border-bottom: 1px solid #d5d5d5; }
.tri { border: 2px solid transparent; border-left: 3px solid #777; border-right: 0; }
.panel-tools { display: flex; align-items: center; gap: 5px; height: 18px; padding: 0 4px; border-bottom: 1px solid #d5d5d5; }
.panel-tools svg { width: 10px; height: 10px; }
.panel-tools .dd { border-width: 2px; border-bottom: 0; margin-left: 2px; }
.stamps { flex: 1; min-height: 0; display: flex; }
.stamp-list { flex: 1; display: flex; flex-direction: column; background: #fefefe; }
.stamp-grid { height: 248px; display: grid; grid-template-columns: 1fr 1fr; grid-template-rows: 45px 22px; justify-items: center; padding: 0 7px 0 5px; }
.stamp-grid > span { padding-top: 8px; }
.seal { width: 52px; height: 22px; display: flex; flex-direction: column; align-items: center; justify-content: center; border: 1px solid #198536; border-radius: 2px; color: #198536; background: #fff; overflow: hidden; white-space: nowrap; }
.seal strong { font-size: 13px; line-height: 14px; font-weight: 500; }
.seal small { font-size: 3px; line-height: 4px; font-weight: 700; }
.cat { display: flex; align-items: center; justify-content: space-between; height: 16px; padding: 0 6px; background: #f1f1f1; }
.cat svg { width: 10px; height: 10px; }
.stamp-grid.lower { flex: 1; height: auto; grid-template-rows: 1fr; align-items: end; padding-bottom: 6px; }
figcaption { margin-top: 5px; text-align: center; }
.tail { height: 10px; }
.narrow { width: 10px; padding: 5px 0; }
.narrow i { flex: none; height: 82px; margin-top: auto; }

/* status bar */
.status { display: flex; align-items: center; justify-content: flex-end; gap: 8px; height: 21px; padding: 0 24px 0 0; background: #8b8b8b; border-bottom: 2px solid #2e2e2e; }
.sep { width: 1px; height: 12px; background: #aaa; }
.zoom { color: #222; }
.status input { appearance: none; width: 70px; height: 12px; background: linear-gradient(#999, #999) center / 100% 1px no-repeat; }
.status input::-webkit-slider-thumb { appearance: none; width: 3px; height: 10px; background: #fff; border-radius: 1px; }

/* windows */
.window { position: absolute; display: flex; flex-direction: column; box-shadow: 1px 3px 8px rgba(0, 0, 0, .3); }
.window > header { display: flex; align-items: center; justify-content: space-between; background: #fff; }
.btn { height: 16px; border: 1px solid #b0b0b0; background: #e2e2e2; }
.btn.primary { border: 2px solid #1b7fd6; }
.dim { color: #999; }
.row { display: flex; align-items: center; }

.create { left: 496px; top: 148px; width: 237px; height: 391px; background: #f0f0f0; border: 1px solid #bbb; }
.create > header { height: 18px; padding: 0 6px 0 4px; color: #888; }
.create-body { flex: 1; display: flex; flex-direction: column; padding: 6px 7px 33px; }
.create .row { height: 19px; padding-left: 2px; }
.create .row input[type=text] { height: 15px; border: 1px solid #ccc; flex: 1; min-width: 0; }
.create .row #f { border-color: #999; margin: 0 3px 0 2px; }
.create .btn { width: 44px; padding: 0; margin-right: 2px; }
.create .pages { padding-left: 41px; gap: 5px; }
.create .spin { width: 40px; height: 15px; display: flex; align-items: center; border: 1px solid #bbb; padding-right: 2px; }
.create .row .spin input { border: 0; height: 12px; text-align: right; padding-right: 4px; color: #777; }
.create .check { padding-left: 0; gap: 3px; height: 19px; }
.create .check input { appearance: none; width: 9px; height: 9px; border: 1px solid #ccc; background: #fff; }
fieldset { flex: 1; margin: 1px 0 21px; padding: 0; border: 1px solid #dcdcdc; }
legend { margin-left: 5px; padding: 0; color: #222; }
.create .field-name { width: 46px; }

.open { left: 573px; top: 229px; width: 606px; height: 342px; background: #fff; border: 1px solid #666; }
.open > header { height: 19px; padding: 0 6px 0 5px; }
.nav { display: flex; align-items: center; height: 27px; padding: 0 8px 0 6px; gap: 7px; }
.nav > button svg { width: 12px; height: 10px; }
.nav > .tiny { margin: 0 -3px 0 -2px; }
.nav > .tiny svg { width: 6px; height: 6px; }
.address { flex: 1; display: flex; align-items: center; height: 20px; margin: 0 1px 0 -4px; padding-left: 2px; border: 1px solid #d5d5d5; }
.reload { width: 22px; height: 18px; margin-left: 6px; border-left: 1px solid #d5d5d5; }
.reload svg { width: 10px; height: 10px; }
.search { display: flex; align-items: center; gap: 7px; width: 129px; height: 20px; padding-left: 9px; border: 1px solid #d5d5d5; }
.search input { flex: 1; min-width: 0; font-size: 7px; }
.search input::placeholder { color: #666; opacity: 1; }
.cmd { display: flex; align-items: center; height: 20px; padding: 0 10px 0 11px; gap: 18px; background: #f5f6f7; border-bottom: 1px solid #e6e8ea; color: #1e3a5c; }
.cmd .grow + button { margin-right: -4px; }
.cmd button:last-child { margin-left: -5px; }
.panes { flex: 1; min-height: 0; display: flex; }
.tree { width: 135px; }
.side { gap: 0; padding: 5px 0; border-left: 0; }
.side i { flex: none; height: 30px; margin-top: auto; margin-bottom: 9px; }
.files { flex: 1; padding: 0 64px 0 9px; border-left: 1px solid #f0f0f0; }
.files table { width: 100%; height: 154px; border-collapse: collapse; table-layout: fixed; font-size: 7px; line-height: 10px; color: #666; }
.files thead { height: 20px; }
.files th { position: relative; height: 20px; padding: 0 0 4px 4px; text-align: left; vertical-align: middle; font-weight: 400; font-size: 8px; color: #47597a; background: linear-gradient(#e2e2e2, #e2e2e2) right top / 1px 16px no-repeat; }
.files th:nth-child(1) { width: 166px; }
.files th:nth-child(2) { width: 92px; }
.files th:nth-child(3) { width: 77px; }
.files td { padding: 0 0 0 4px; }
.files td:first-child { font-size: 8px; color: #222; }
.files td:last-child { text-align: right; padding-right: 4px; }
.files td svg { display: inline-block; width: 9px; height: 10px; margin-right: 3px; vertical-align: middle; }
.selected { background: #cce8ff; outline: 1px solid #99d1ff; outline-offset: -1px; }
.sort { position: absolute; top: 2px; left: 48%; width: 4px; height: 4px; border: solid #888; border-width: 1px 0 0 1px; transform: rotate(45deg); }
.open > footer { display: grid; grid-template-columns: 126px 1fr 121px; gap: 4px 3px; height: 49px; padding: 5px 10px 8px 0; background: #f0f0f0; position: relative; align-items: center; }
.open > footer label { text-align: right; }
.combo, .select { display: flex; align-items: center; height: 16px; border: 1px solid #888; background: #fff; padding-right: 4px; }
.combo { margin-right: 5px; }
.combo input { flex: 1; min-width: 0; padding-left: 2px; }
.select { border-color: #b0b0b0; background: #e6e6e6; }
.select select { appearance: none; flex: 1; min-width: 0; padding-left: 1px; font-size: 7px; }
.actions { grid-column: 3; display: grid; grid-template-columns: 1fr 1fr; gap: 9px; }
.grip { position: absolute; right: 1px; bottom: 1px; }

/* numbered pointers */
.callouts { position: absolute; left: 0; top: 0; pointer-events: none; }
.num { fill: #fff; font-size: 60px; font-weight: 500; text-anchor: middle; }
```

FILE: mosaic.js
```js
(() => {
  const NS = "http://www.w3.org/2000/svg";

  function cell(svg, x, y, w, h, fill) {
    const r = document.createElementNS(NS, "rect");
    r.setAttribute("x", x);
    r.setAttribute("y", y);
    r.setAttribute("width", w);
    r.setAttribute("height", h);
    r.setAttribute("fill", fill);
    svg.appendChild(r);
  }
  const gray = v => `rgb(${v},${v},${v})`;
  const jitter = (a, b) => ((a * 7 + b * 13 + a * b * 3) % 11) - 5;

  // Folder tree: one base level per 8px row
  const treeSvg = document.getElementById("tree-mosaic");
  const rowLevels = [216, 228, 218, 236, 208, 246, 200, 255, 200, 255, 196, 255, 196, 255, 198, 255, 198, 218, 188, 228, 210, 236, 214, 221, 222, 221, 232, 204, 214];
  rowLevels.forEach((base, r) => {
    const y = r * 8;
    const h = r === 28 ? 5 : 8;
    const wide = r === 17 || r === 18;
    if (wide) cell(treeSvg, 0, y + (r === 17 ? 2 : 0), 42, r === 17 ? 6 : 8, "#d9d9d9");
    cell(treeSvg, 42, y, 8, h, wide ? "#e9dca8" : base < 225 ? "#fbdf82" : "#fbeab8");
    cell(treeSvg, 50, y, 8, h, r === 18 ? "#f0da96" : base === 255 ? "#fbfaf3" : "#efeee9");
    for (let c = 0; c < 9; c++) {
      const v = base === 255 ? 255 : Math.min(250, base + jitter(r, c) * 2);
      cell(treeSvg, 58 + c * 8, y, 8, h, gray(v));
    }
    if (wide) cell(treeSvg, 130, y, 4, h, "#dedede");
  });

  // Address path
  const pathSvg = document.getElementById("path-mosaic");
  cell(pathSvg, 0, 0, 4, 13, "#fbdf82");
  cell(pathSvg, 4, 0, 8, 13, "#fbeab0");
  const pathLevels = [236, 228, 220, 200, 244, 250, 206, 218, 214, 226, 248, 208, 206, 202, 234, 220, 200, 214, 210, 226, 210, 200, 214, 206, 200, 212, 240, 240, 216, 210, 206, 216, 176, 200, 204];
  pathLevels.forEach((v, c) => {
    cell(pathSvg, 12 + c * 8, 0, 8, 8, gray(v));
    cell(pathSvg, 12 + c * 8, 8, 8, 5, gray(Math.min(252, v + 26)));
  });
})();
```
